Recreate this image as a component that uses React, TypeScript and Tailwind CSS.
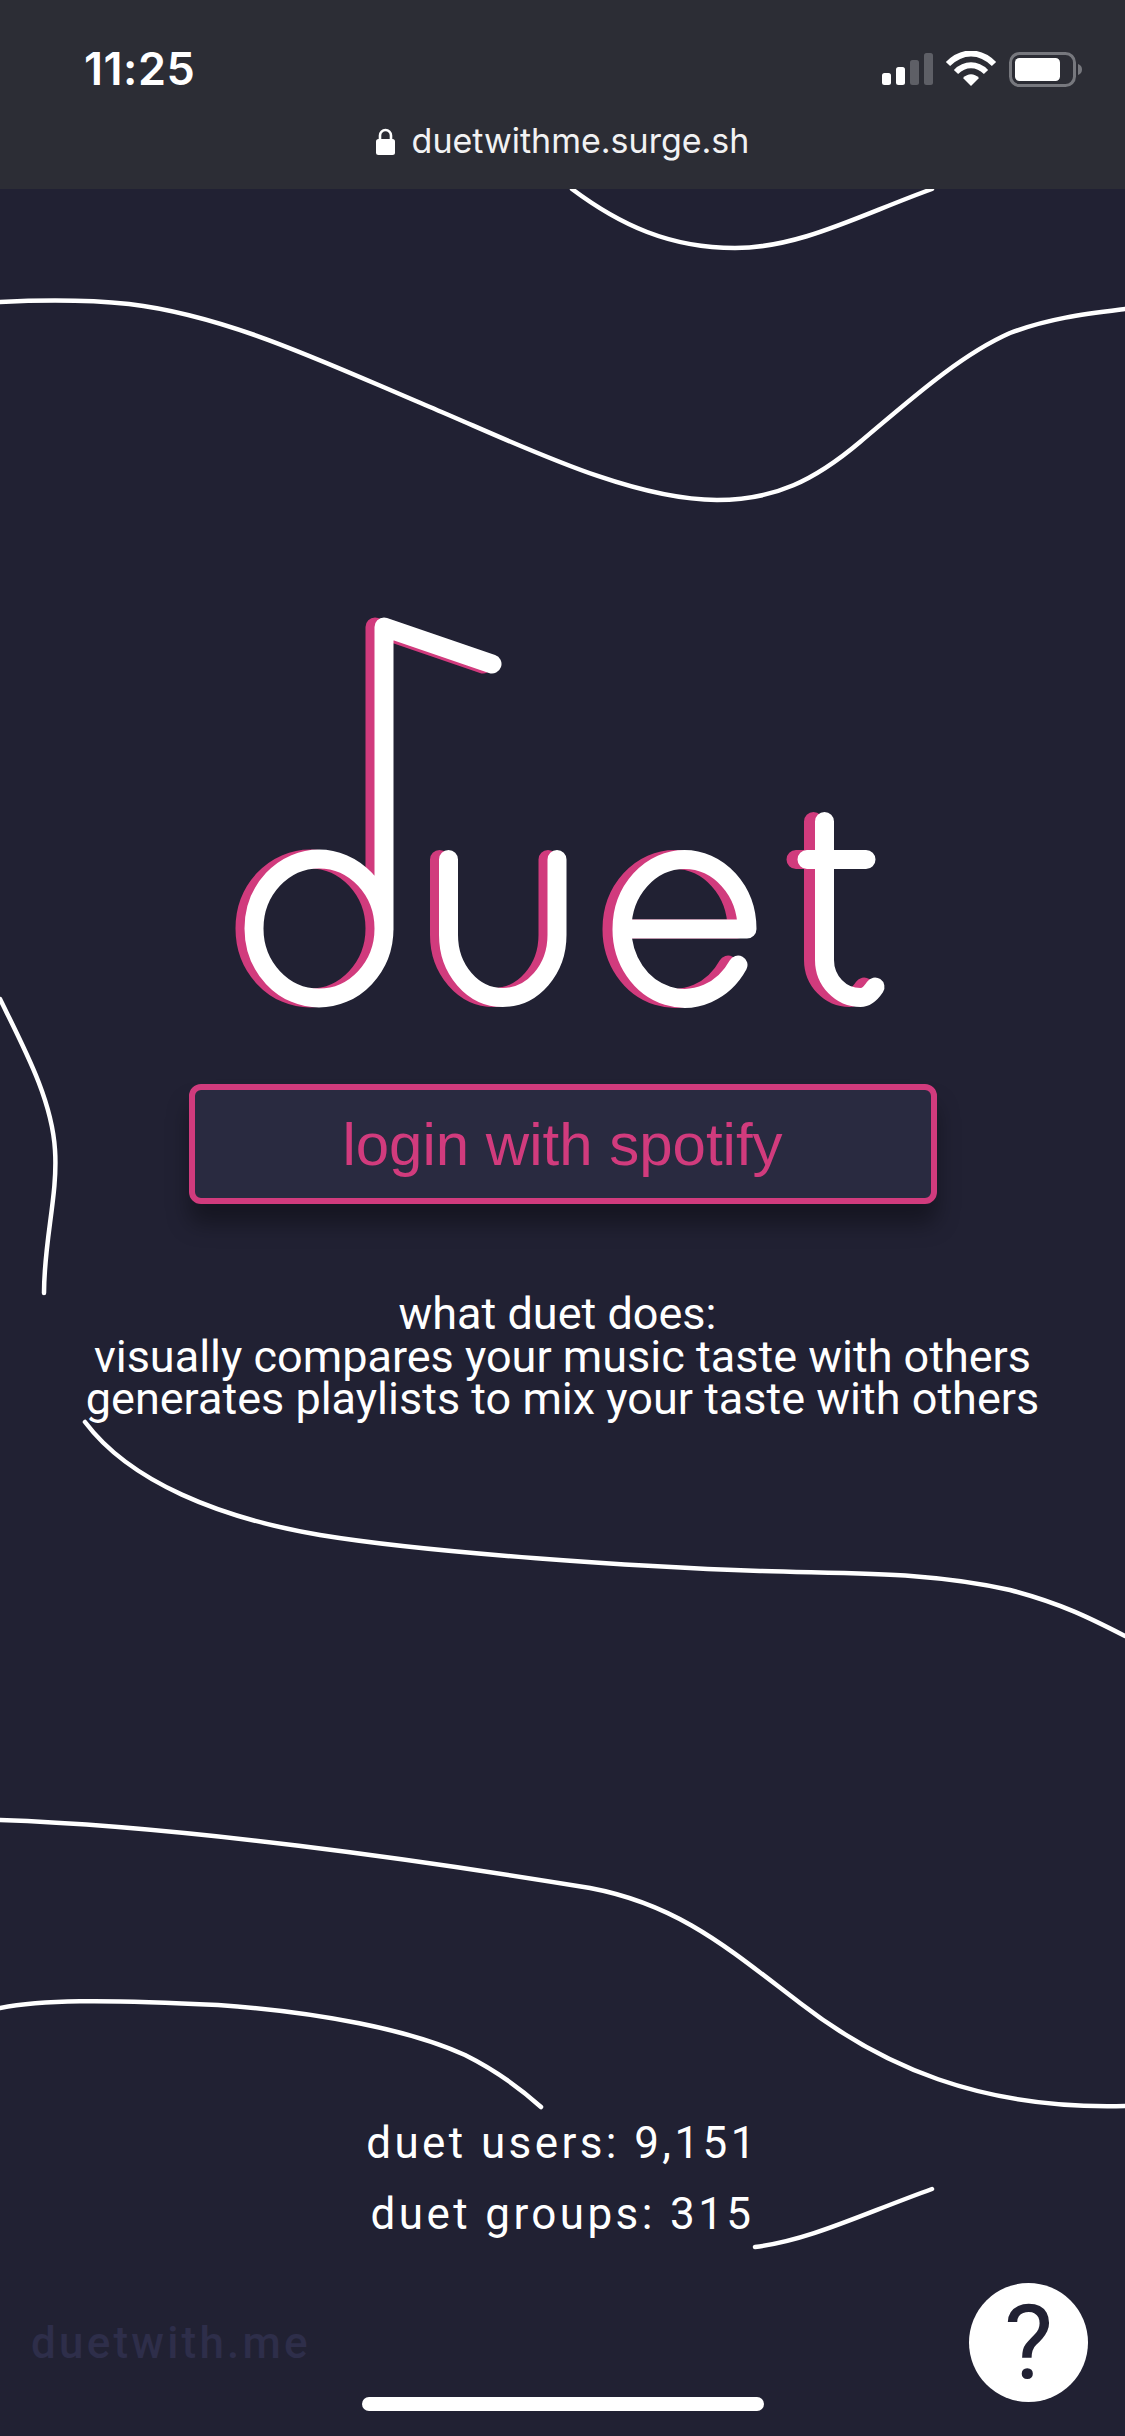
import React from 'react';

const letters = [
  { d: 'M384 930 V627 L492 664 M254 928.5 A65 69.5 0 1 0 384 928.5 A65 69.5 0 1 0 254 928.5', shift: -9 },
  { d: 'M448.5 859.5 V935 A54.25 62.5 0 0 0 557 935 V859.5', shift: -9 },
  { d: 'M747 929 H622 M747 929 A62.5 69.5 0 0 0 622 929 A62.5 69 0 0 0 738 965', shift: -10 },
  { d: 'M807 859.5 H866 M824.5 821.5 V960 A36 37.5 0 0 0 860.5 997.5 Q868 997.5 875 987', shift: -11 },
];

const waves = [
  'M572 189 C620 225 670 248 735 248 C800 248 860 215 932 189',
  'M0 302 C40 300 90 300 129 304 C230 316 330 365 430 407 C520 445 630 500 717 500 C775 500 815 480 860 442 C910 400 960 355 1010 333 C1050 318 1085 314 1125 309',
  'M0 999 C25 1050 52 1100 55 1150 C58 1195 44 1240 44 1293',
  'M85 1422 C130 1482 220 1518 320 1535 C430 1553 640 1567 760 1571 C860 1574 930 1572 1010 1590 C1060 1603 1090 1618 1125 1636',
  'M0 1820 C180 1826 420 1860 590 1888 C680 1905 730 1950 800 2003 C880 2065 980 2110 1125 2106',
  'M0 2008 C40 2000 100 1999 218 2005 C320 2012 410 2030 465 2055 C495 2070 520 2088 541 2107',
  'M755 2247 C810 2240 860 2215 932 2189',
];

const Logo = () => (
  <svg aria-label="duet" viewBox="230 610 660 400" className="w-[660px] h-[400px]" fill="none" strokeLinecap="round" strokeLinejoin="round" strokeWidth="19">
    {letters.map((l) => (
      <path key={l.d} d={l.d} stroke="#d13b7d" transform={`translate(${l.shift} 0)`} />
    ))}
    {letters.map((l) => (
      <path key={l.d} d={l.d} stroke="#ffffff" />
    ))}
  </svg>
);

const StatusIcons = () => (
  <svg viewBox="0 0 204 36" className="w-[204px] h-[36px]">
    <rect x="4" y="22" width="9" height="12" rx="2.5" fill="#fff" />
    <rect x="18" y="16" width="9" height="18" rx="2.5" fill="#fff" />
    <rect x="32" y="9" width="9" height="25" rx="2.5" fill="#5e5f66" />
    <rect x="46" y="2" width="9" height="32" rx="2.5" fill="#5e5f66" />
    <path d="M70 13 C84 -1 102 -1 116 13" fill="none" stroke="#fff" strokeWidth="6" />
    <path d="M78 21 C87 12 99 12 108 21" fill="none" stroke="#fff" strokeWidth="6" />
    <path d="M85 27 C90 22 96 22 101 27 L93 35 Z" fill="#fff" />
    <rect x="132.5" y="2.5" width="64" height="32" rx="9" fill="none" stroke="#77787e" strokeWidth="3" />
    <rect x="137" y="7" width="45" height="23" rx="4.5" fill="#fff" />
    <path d="M200 13 C203 14 204 16 204 18.5 C204 21 203 23 200 24 Z" fill="#77787e" />
  </svg>
);

const App: React.FC = () => {
  return (
    <div className="relative w-[1125px] h-[2436px] overflow-hidden bg-[#212133] text-white font-['Roboto',sans-serif]">
      <svg viewBox="0 0 1125 2436" className="absolute inset-0 w-full h-full" fill="none" stroke="#fff" strokeWidth="4.5" strokeLinecap="round">
        {waves.map((d) => (
          <path key={d} d={d} />
        ))}
      </svg>

      <header className="relative h-[189px] bg-[#2c2d35] font-['Inter',sans-serif]">
        <div className="flex items-center justify-between pl-[84px] pr-[43px] pt-[42px] h-[96px]">
          <span className="text-[45px] leading-[52px] font-semibold tracking-[0.5px]">11:25</span>
          <StatusIcons />
        </div>
        <div className="flex items-center justify-center gap-[17px] mt-[25px]">
          <svg viewBox="0 0 19 27" className="w-[19px] h-[27px]">
            <path d="M4 12 V7.5 A5.5 5.5 0 0 1 15 7.5 V12" fill="none" stroke="#fff" strokeWidth="2.6" />
            <rect x="0" y="11" width="19" height="16" rx="2.5" fill="#fff" />
          </svg>
          <span className="text-[34px] leading-[40px] text-[#f2f2f3]">duetwithme.surge.sh</span>
        </div>
      </header>

      <main className="relative flex flex-col items-center">
        <div className="mt-[421px] -ml-[5px]">
          <Logo />
        </div>
        <button className="mt-[74px] flex items-center justify-center w-[748px] h-[120px] rounded-[12px] border-[6px] border-[#d13b7d] bg-[#292a40] shadow-[0_20px_22px_rgba(0,0,0,0.35)] pt-[2px] font-['Liberation_Sans',sans-serif] text-[60px] leading-none text-[#d13b7d]">
          login with spotify
        </button>
        <div className="mt-[89px] text-center text-[45px] leading-[42.5px] font-normal">
          <p className="pr-[10px]">what duet does:</p>
          <p>visually compares your music taste with others</p>
          <p>generates playlists to mix your taste with others</p>
        </div>
        <div className="mt-[687px] text-center text-[44px] leading-[71px] font-normal tracking-[3.4px]">
          <p>duet users: 9,151</p>
          <p>duet groups: 315</p>
        </div>
      </main>

      <span className="absolute left-[31px] top-[2317px] text-[44px] leading-[52px] font-medium tracking-[3.2px] text-[#2e2e4a]">duetwith.me</span>
      <div className="absolute left-[969px] top-[2283px] flex items-center justify-center w-[119px] h-[119px] rounded-full bg-white text-[104px] font-normal leading-none text-[#212133]">?</div>
      <div className="absolute left-[362px] top-[2397px] w-[402px] h-[14px] rounded-[7px] bg-white" />
    </div>
  );
};

export default App;
